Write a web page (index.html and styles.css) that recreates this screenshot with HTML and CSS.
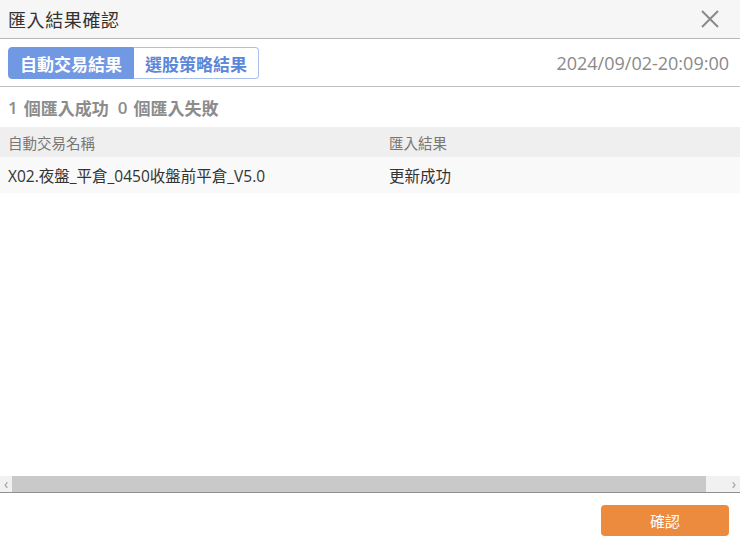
FILE: index.html
```html
<!DOCTYPE html>
<html lang="zh-Hant">
<head>
<meta charset="utf-8">
<link rel="stylesheet" href="styles.css">
</head>
<body>
<div class="dialog">
  <div class="titlebar">
    <span class="title">匯入結果確認</span>
    <svg class="close" width="20" height="20" viewBox="0 0 20 20"><path d="M2 2 L18 18 M18 2 L2 18" stroke="#8a8a8a" stroke-width="2" fill="none"/></svg>
  </div>
  <div class="toolbar">
    <div class="tabs">
      <span class="tab active">自動交易結果</span>
      <span class="tab">選股策略結果</span>
    </div>
    <span class="date">2024/09/02-20:09:00</span>
  </div>
  <div class="summary">
    <span class="num">1</span><span class="txt">個匯入成功</span>
    <span class="num">0</span><span class="txt">個匯入失敗</span>
  </div>
  <div class="table">
    <div class="row head">
      <span class="c1">自動交易名稱</span>
      <span class="c2">匯入結果</span>
    </div>
    <div class="row data">
      <span class="c1">X02.夜盤_平倉_0450收盤前平倉_V5.0</span>
      <span class="c2">更新成功</span>
    </div>
  </div>
  <div class="spacer"></div>
  <div class="hscroll">
    <span class="arrow">‹</span>
    <span class="thumb"></span>
    <span class="arrow">›</span>
  </div>
  <div class="footer">
    <button class="ok">確認</button>
  </div>
</div>
</body>
</html>
```
FILE: styles.css
```css
html, body {
  margin: 0;
  padding: 0;
  background: #fff;
}
body {
  font-family: "Open Sans", "Noto Sans CJK TC", sans-serif;
}
.dialog {
  width: 740px;
  height: 546px;
  display: flex;
  flex-direction: column;
  overflow: hidden;
}
.titlebar {
  height: 38px;
  flex: none;
  background: #f6f6f6;
  border-bottom: 1px solid #b8b8b8;
  display: flex;
  align-items: center;
  justify-content: space-between;
  padding: 0 20px 0 8px;
}
.title {
  font-size: 18px;
  letter-spacing: 0.6px;
  color: #333;
}
.toolbar {
  height: 47px;
  flex: none;
  display: flex;
  align-items: center;
  justify-content: space-between;
  padding: 0 11px 0 8px;
  border-bottom: 1px solid #c0c0c0;
}
.tabs {
  display: flex;
  height: 32px;
  margin-top: 1px;
}
.tab {
  display: flex;
  align-items: center;
  justify-content: center;
  width: 125px;
  box-sizing: border-box;
  font-size: 17px;
  font-weight: bold;
  color: #5c86d8;
  border: 1px solid #a9c0ea;
  border-left: none;
  border-radius: 0 4px 4px 0;
}
.tab.active {
  width: 126px;
  background: #7198e2;
  color: #fff;
  border: 1px solid #7198e2;
  border-radius: 4px 0 0 4px;
}
.date {
  font-size: 18px;
  color: #8a8a8a;
}
.summary {
  height: 40px;
  flex: none;
  display: flex;
  align-items: center;
  padding-left: 8px;
  font-size: 17px;
  font-weight: 600;
  color: #8c8c8c;
}
.summary .num {
  margin-right: 6px;
}
.summary .txt {
  margin-right: 9px;
}
.table {
  flex: none;
}
.row {
  display: flex;
  align-items: center;
}
.row.head {
  height: 30px;
  background: #efefef;
  font-size: 14.5px;
  color: #777;
}
.row.data {
  height: 36px;
  background: #f9f9f9;
  font-size: 15.5px;
  color: #333;
}
.c1 {
  width: 381px;
  padding-left: 8px;
}
.c2 {
  flex: 1;
}
.spacer {
  flex: 1;
}
.hscroll {
  height: 16px;
  flex: none;
  display: flex;
  align-items: center;
  background: #f1f1f1;
  border-bottom: 1px solid #8f8f8f;
}
.arrow {
  width: 12px;
  text-align: center;
  font-size: 14px;
  line-height: 16px;
  color: #999;
}
.arrow:last-child {
  width: 34px;
  text-align: right;
  padding-right: 4px;
  box-sizing: border-box;
}
.thumb {
  flex: 1;
  height: 16px;
  background: #c9c9c9;
}
.footer {
  height: 53px;
  flex: none;
  display: flex;
  justify-content: flex-end;
  align-items: flex-start;
  padding: 12px 11px 0 0;
  box-sizing: border-box;
}
.ok {
  width: 128px;
  height: 31px;
  border: none;
  border-radius: 4px;
  background: #ec8a3d;
  color: #fff;
  font-family: "Open Sans", "Noto Sans CJK TC", sans-serif;
  font-size: 15px;
  cursor: pointer;
}
```
